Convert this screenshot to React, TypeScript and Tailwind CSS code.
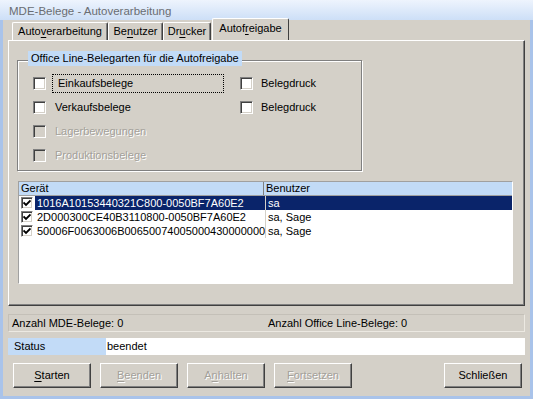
import React from 'react'

function classNames(...xs: Array<string | false | null | undefined>) {
  return xs.filter(Boolean).join(' ')
}

const disabledText = 'text-[#a3a09a] [text-shadow:1px_1px_0_#ffffff]'

function Mnemonic({ text, at }: { text: string; at: number }) {
  if (at < 0) return <>{text}</>
  return (
    <>
      {text.slice(0, at)}
      <span className="underline underline-offset-[2px]">{text[at]}</span>
      {text.slice(at + 1)}
    </>
  )
}

function CheckBox({ disabled, checked, small }: { disabled?: boolean; checked?: boolean; small?: boolean }) {
  return (
    <span
      className={classNames(
        'relative box-border block shrink-0 border-t border-l border-b border-r',
        small ? 'h-[12px] w-[12px]' : 'h-[13px] w-[13px]',
        'border-t-[#808080] border-l-[#808080] border-b-white border-r-white',
        'shadow-[inset_1px_1px_0_#404040,inset_-1px_-1px_0_#d4d0c8]',
        disabled ? 'bg-[#d4d0c8]' : 'bg-white'
      )}
    >
      {checked && (
        <svg className="absolute left-[1px] top-[1px]" width="8" height="8" viewBox="0 0 8 8">
          <path d="M0.5 3.5 L3 6 L7.5 1.5" stroke="#000" strokeWidth="1.8" fill="none" />
        </svg>
      )}
    </span>
  )
}

function Tab({ label, at, width, active }: { label: string; at: number; width: number; active?: boolean }) {
  return (
    <div
      style={{ width }}
      className={classNames(
        'relative flex items-center justify-center rounded-t-[2px] border-t border-l border-r border-t-white border-l-white border-r-[#404040] bg-[#d4d0c8]',
        active ? 'z-10 -mr-[1px] h-[22px] pb-[3px]' : 'h-[18px] shadow-[inset_-1px_0_0_#808080]'
      )}
    >
      <Mnemonic text={label} at={at} />
    </div>
  )
}

function Button({ label, at, disabled }: { label: string; at: number; disabled?: boolean }) {
  return (
    <div
      className={classNames(
        'flex h-[25px] w-[78px] items-center justify-center border-t border-l border-b border-r border-t-white border-l-white border-b-[#404040] border-r-[#404040] shadow-[inset_-1px_-1px_0_#808080]',
        disabled && disabledText
      )}
    >
      <Mnemonic text={label} at={at} />
    </div>
  )
}

const rows = [
  { device: '1016A10153440321C800-0050BF7A60E2', user: 'sa', selected: true },
  { device: '2D000300CE40B3110800-0050BF7A60E2', user: 'sa, Sage' },
  { device: '50006F0063006B00650074005000430000000-4C', user: 'sa, Sage' },
]

export default function App() {
  return (
    <div className="h-[399px] w-[533px] overflow-hidden bg-[#d4d0c8] font-['Liberation_Sans',Arial,sans-serif] text-[11px] text-black">
      {/* Title bar */}
      <div className="flex h-[20px] items-center bg-gradient-to-b from-[#eef4fd] to-[#cddff7] pl-[9px] pt-[3px] text-[11.5px] text-[#6a6d72]">
        MDE-Belege - Autoverarbeitung
      </div>

      <div className="h-[379px] border-l-[3px] border-r-[3px] border-b-[3px] border-[#a9c3ea] px-[5px]">
        {/* Tabs */}
        <div className="flex h-[20px] items-end pl-[4px]">
          <Tab label="Autoverarbeitung" at={4} width={96} />
          <Tab label="Benutzer" at={2} width={55} />
          <Tab label="Drucker" at={2} width={48} />
          <div className="w-[1px]" />
          <Tab label="Autofreigabe" at={5} width={77} active />
        </div>

        {/* Tab panel */}
        <div className="relative h-[266px] border-t border-l border-b border-r border-t-white border-l-white border-b-[#404040] border-r-[#404040] shadow-[inset_-1px_-1px_0_#808080]">
          {/* Group box */}
          <div className="relative ml-[8px] mt-[19px] h-[111px] w-[345px] border border-[#808080] shadow-[inset_1px_1px_0_#ffffff,1px_1px_0_#ffffff]">
            <div className="absolute -top-[10px] left-[10px] bg-[#c2dbf7] px-[3px] leading-[15px]">
              Office Line-Belegarten für die Autofreigabe
            </div>
            <div className="flex pt-[16px]">
              <div className="w-[222px] pl-[15px]">
                <div className="flex h-[24px] items-start gap-[9px]">
                  <CheckBox />
                  <span className="-ml-[3px] -mt-[3px] border border-dotted border-black px-[5px] pr-[90px] leading-[17px]">
                    Einkaufsbelege
                  </span>
                </div>
                <div className="flex h-[24px] items-start gap-[9px]">
                  <CheckBox />
                  <span className="leading-[13px]">Verkaufsbelege</span>
                </div>
                <div className="flex h-[24px] items-start gap-[9px]">
                  <CheckBox disabled />
                  <span className={classNames('leading-[13px]', disabledText)}>Lagerbewegungen</span>
                </div>
                <div className="flex h-[24px] items-start gap-[9px]">
                  <CheckBox disabled />
                  <span className={classNames('leading-[13px]', disabledText)}>Produktionsbelege</span>
                </div>
              </div>
              <div>
                <div className="flex h-[24px] items-start gap-[8px]">
                  <CheckBox />
                  <span className="leading-[13px]">Belegdruck</span>
                </div>
                <div className="flex h-[24px] items-start gap-[8px]">
                  <CheckBox />
                  <span className="leading-[13px]">Belegdruck</span>
                </div>
              </div>
            </div>
          </div>

          {/* List view */}
          <div className="ml-[9px] mt-[10px] h-[103px] w-[495px] border-t border-l border-t-[#a0a0a0] border-l-[#a0a0a0] border-b border-r border-b-white border-r-white bg-white">
            <div className="flex h-[14px] border-b border-[#a0a0a0] bg-[#c2dbf7] leading-[13px]">
              <div className="w-[245px] border-r border-[#808080] pl-[2px]">Gerät</div>
              <div className="flex-1 pl-[2px]">Benutzer</div>
            </div>
            {rows.map((r) => (
              <div key={r.device} className="flex h-[14px] items-center leading-[14px]">
                <div className="flex w-[246px] items-center overflow-hidden whitespace-nowrap pl-[2px]">
                  <CheckBox checked small />
                  <span
                    className={classNames(
                      'ml-[2px] min-w-0 flex-1 overflow-hidden pl-[2px]',
                      r.selected && 'bg-[#0a246a] text-white'
                    )}
                  >
                    {r.device}
                  </span>
                </div>
                <div
                  className={classNames(
                    'h-[14px] w-[247px] border-l border-[#d4d0c8] pl-[2px]',
                    r.selected && 'border-[#0a246a] bg-[#0a246a] text-white'
                  )}
                >
                  {r.user}
                </div>
              </div>
            ))}
          </div>
        </div>

        {/* Counters */}
        <div className="mt-[8px] flex h-[18px] items-center border-t border-l border-t-[#c4c0b8] border-l-[#c4c0b8] border-b border-r border-b-[#ece9e2] border-r-[#ece9e2] pl-[3px]">
          <div className="w-[256px]">Anzahl MDE-Belege: 0</div>
          <div>Anzahl Office Line-Belege: 0</div>
        </div>

        {/* Status */}
        <div className="mt-[6px] flex h-[17px] items-center leading-[17px]">
          <div className="w-[98px] bg-[#c2dbf7] pl-[6px]">Status</div>
          <div className="flex-1 bg-white pl-[1px]">beendet</div>
        </div>

        {/* Buttons */}
        <div className="mt-[8px] flex pl-[5px] pr-[3px]">
          <div className="flex gap-[9px]">
            <Button label="Starten" at={0} />
            <Button label="Beenden" at={0} disabled />
            <Button label="Anhalten" at={1} disabled />
            <Button label="Fortsetzen" at={0} disabled />
          </div>
          <div className="flex-1" />
          <Button label="Schließen" at={-1} />
        </div>
      </div>
    </div>
  )
}
